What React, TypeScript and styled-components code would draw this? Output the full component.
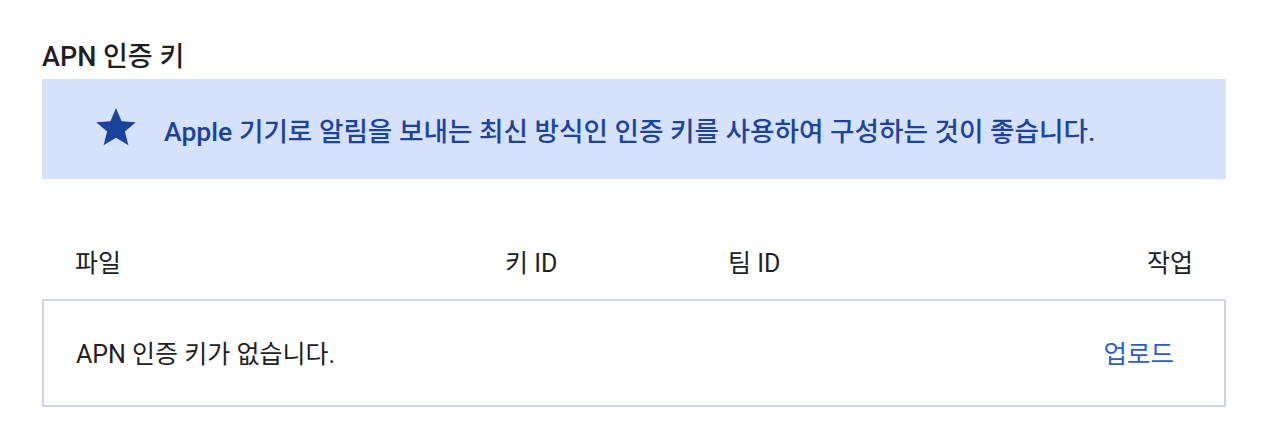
import React from 'react';
import styled, { createGlobalStyle } from 'styled-components';

const GlobalStyle = createGlobalStyle`
  body {
    margin: 0;
    background: #ffffff;
    font-family: Roboto, "Noto Sans CJK KR", sans-serif;
    color: #202124;
  }
`;

interface Column {
  label: string;
  align?: 'left' | 'right';
}

const columns: Column[] = [
  { label: '파일' },
  { label: '키 ID' },
  { label: '팀 ID' },
  { label: '작업', align: 'right' },
];

const StarIcon: React.FC = () => (
  <svg width="46" height="44" viewBox="0 0 24 24" aria-hidden="true">
    <path
      fill="currentColor"
      d="M12 1.6l3.05 7.2 7.75.55-5.95 5.05 1.9 7.6L12 17.9 5.25 22l1.9-7.6L1.2 9.35l7.75-.55z"
    />
  </svg>
);

const App: React.FC = () => {
  return (
    <>
      <GlobalStyle />
      <Page>
        <Title>APN 인증 키</Title>
        <Banner>
          <BannerIcon>
            <StarIcon />
          </BannerIcon>
          <BannerText>Apple 기기로 알림을 보내는 최신 방식인 인증 키를 사용하여 구성하는 것이 좋습니다.</BannerText>
        </Banner>

        <HeaderRow>
          {columns.map((col) => (
            <HeaderCell key={col.label} $align={col.align}>
              {col.label}
            </HeaderCell>
          ))}
        </HeaderRow>

        <TableBox>
          <EmptyText>APN 인증 키가 없습니다.</EmptyText>
          <UploadButton type="button">업로드</UploadButton>
        </TableBox>
      </Page>
    </>
  );
};

export default App;

const Page = styled.div`
  padding: 40px 38px 26px 42px;
`;

const Title = styled.h2`
  margin: 0 0 4px;
  font-size: 27px;
  font-weight: 500;
  line-height: 35px;
  color: #1f1f1f;
`;

const Banner = styled.div`
  display: flex;
  align-items: center;
  height: 100px;
  padding-left: 51px;
  background: #d6e2fb;
`;

const BannerIcon = styled.span`
  display: flex;
  color: #1c439b;
  margin-right: 25px;
  margin-top: -4px;
`;

const BannerText = styled.p`
  margin: 0;
  font-size: 26.6px;
  font-weight: 500;
  color: #1c439b;
`;

const HeaderRow = styled.div`
  display: grid;
  grid-template-columns: 430px 223px 1fr auto;
  align-items: center;
  margin-top: 64px;
  padding: 0 33px;
  height: 36px;
`;

const HeaderCell = styled.div<{ $align?: 'left' | 'right' }>`
  font-size: 25px;
  color: #202124;
  text-align: ${({ $align }) => $align ?? 'left'};
`;

const TableBox = styled.div`
  display: flex;
  align-items: center;
  justify-content: space-between;
  margin-top: 20px;
  height: 104px;
  padding: 0 50px 0 32px;
  border: 2px solid #cfd3de;
`;

const EmptyText = styled.span`
  font-size: 25px;
  color: #202124;
  margin-top: -3px;
`;

const UploadButton = styled.button`
  border: none;
  background: none;
  padding: 0;
  font-family: inherit;
  font-size: 25.5px;
  color: #2a5bd7;
  cursor: pointer;
  margin-top: -3px;
`;
